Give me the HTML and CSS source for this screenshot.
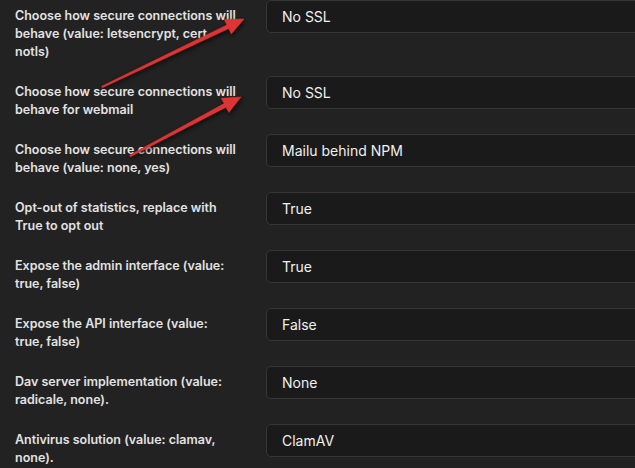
FILE: index.html
```html
<html>
<head>
<meta charset="utf-8" />
<link rel="stylesheet" href="styles.css">
</head>

<body>
    <div id="settings">
        <div class="row">
            <div class="label">Choose how secure connections will behave (value: letsencrypt, cert notls)</div>
            <div class="field">No SSL</div>
        </div>
        <div class="row">
            <div class="label">Choose how secure connections will behave for webmail</div>
            <div class="field">No SSL</div>
        </div>
        <div class="row">
            <div class="label">Choose how secure connections will behave (value: none, yes)</div>
            <div class="field">Mailu behind NPM</div>
        </div>
        <div class="row">
            <div class="label">Opt-out of statistics, replace with True to opt out</div>
            <div class="field">True</div>
        </div>
        <div class="row">
            <div class="label">Expose the admin interface (value: true, false)</div>
            <div class="field">True</div>
        </div>
        <div class="row">
            <div class="label">Expose the API interface (value: true, false)</div>
            <div class="field">False</div>
        </div>
        <div class="row">
            <div class="label">Dav server implementation (value: radicale, none).</div>
            <div class="field">None</div>
        </div>
        <div class="row">
            <div class="label">Antivirus solution (value: clamav, none).</div>
            <div class="field">ClamAV</div>
        </div>
    </div>

    <!-- annotation arrows drawn over the form -->
    <svg id="arrows" width="635" height="468">
        <polygon points="101.7,86.3 226.9,25.0 224.3,19.6 244,19 231.3,34.0 228.7,28.6 102.3,87.7" />
        <polygon points="129.6,155.3 224.2,103.6 221.3,98.3 241,97 228.9,112.5 226.0,107.2 130.4,156.7" />
    </svg>
</body>
</html>
```

FILE: styles.css
```css
body {
    margin: 0px;
    background: #222222;
    color: #e2e2e2;
    font-family: Inter, "Noto Sans", sans-serif;
    overflow: hidden;
}

#settings {
    width: 720px;
    padding-left: 15px;
}

.row {
    display: flex;
    align-items: flex-start;
    gap: 29px;
    margin-bottom: 15px;
}

.label {
    width: 222px;
    flex: none;
    padding-top: 7px;
    font-size: 12.5px;
    font-weight: 600;
    line-height: 18px;
}

.field {
    flex: 1;
    height: 33px;
    box-sizing: border-box;
    padding: 0px 15px;
    line-height: 31px;
    font-size: 14px;
    color: #f0f0f0;
    background: #1a1a1a;
    border: 1px solid #363636;
    border-radius: 5px;
}

#arrows {
    position: absolute;
    top: 0px;
    left: 0px;
    pointer-events: none;
}
#arrows polygon {
    fill: #e03434;
    stroke: #e03434;
    stroke-width: 0.6;
    stroke-linejoin: round;
    filter: drop-shadow(1px 2px 2px rgba(0, 0, 0, 0.7));
}
```
